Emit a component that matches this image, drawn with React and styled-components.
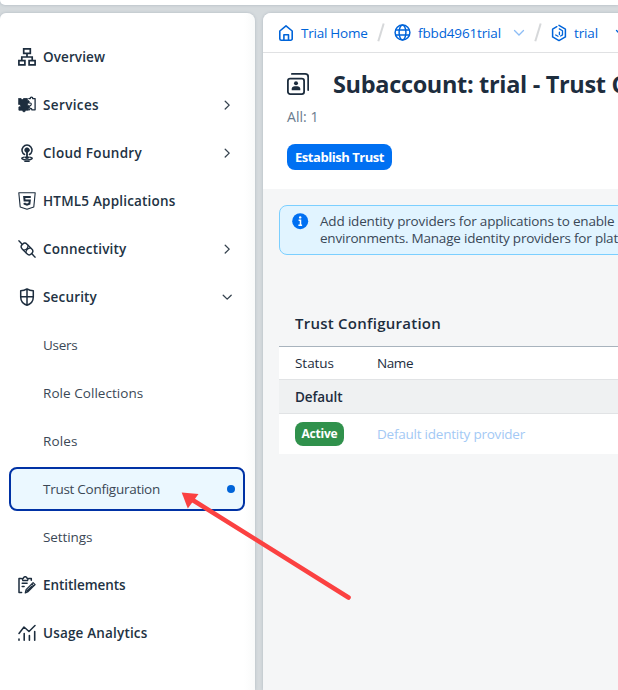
import React from "react";
import styled, { createGlobalStyle } from "styled-components";

const GlobalStyle = createGlobalStyle`
  * { box-sizing: border-box; }
  html, body { margin: 0; height: 100%; overflow: hidden; }
  body { font-family: "Open Sans", "Noto Sans", sans-serif; background: #d5dadd; color: #1d2d3e; }
`;

const Page = styled.div`
  position: relative;
  display: flex;
  flex-direction: column;
  width: 618px;
  height: 690px;
  overflow: hidden;
  background: #d5dadd;
`;

const ShellBar = styled.header`
  flex: none;
  height: 5px;
  background: #fff;
  border-bottom-left-radius: 5px;
  box-shadow: 0 0 3px rgba(85, 107, 130, 0.35);
`;

const Body = styled.div`
  display: flex;
  gap: 8px;
  flex: 1;
  min-height: 0;
  padding-top: 8px;
`;

const Sidebar = styled.nav`
  flex: none;
  display: flex;
  flex-direction: column;
  gap: 4px;
  width: 255px;
  padding: 22px 10px 0 9px;
  background: linear-gradient(to right, #fff 244px, #f9fafa 255px);
  border-radius: 6px 8px 0 0;
  box-shadow: 0 0 3px rgba(85, 107, 130, 0.3);
`;

const NavItem = styled.div`
  flex: none;
  display: flex;
  align-items: center;
  height: 44px;
  padding: 0 7px;
  border: 2px solid ${(p) => (p.$active ? "#0032a5" : "transparent")};
  border-radius: 8px;
  background: ${(p) => (p.$active ? "#ebf8ff" : "transparent")};
`;

const NavIcon = styled.span`
  flex: none;
  display: flex;
  width: 18px;
  height: 18px;
  margin-right: 7px;
  color: #1d2d3e;
`;

const Label = styled.span`
  font-size: ${(p) => p.$size || 13.5}px;
  font-weight: ${(p) => p.$weight || 400};
  letter-spacing: ${(p) => p.$track || 0}px;
  line-height: 18px;
  white-space: nowrap;
`;

const NavLabel = styled(Label)`
  flex: 1;
  color: ${(p) => (p.$weight ? "#223243" : "#3b4856")};
`;

const Chevron = styled.span`
  display: flex;
  width: 12px;
  height: 12px;
  margin-right: 3px;
  margin-bottom: 1px;
  color: #36434f;
`;

const ActiveDot = styled.span`
  width: 8px;
  height: 8px;
  border-radius: 50%;
  background: #0064d9;
  margin: 0 1px 1px 0;
`;

const Main = styled.main`
  flex: none;
  width: 760px;
  display: flex;
  flex-direction: column;
  background: #f5f6f7;
  border-top-left-radius: 8px;
  overflow: hidden;
  box-shadow: 0 0 3px rgba(85, 107, 130, 0.3);
`;

const Breadcrumbs = styled.div`
  flex: none;
  display: flex;
  align-items: center;
  height: 40px;
  padding-left: 15px;
  background: #fff;
  border-bottom: 1px solid #e0e1e3;
  color: #0064d9;
`;

const Crumb = styled.div`
  display: flex;
  align-items: center;
  gap: 7px;
  width: ${(p) => p.$width}px;
`;

const CrumbIcon = styled.span`
  flex: none;
  display: flex;
`;

const Slash = styled.span`
  flex: none;
  display: flex;
  margin: 0 9px;
`;

const CrumbChevron = styled.span`
  flex: none;
  display: flex;
  margin-left: ${(p) => p.$gap}px;
  color: ${(p) => (p.$strong ? "#0064d9" : "#8dbdf5")};
`;

const TitleArea = styled.section`
  flex: none;
  display: flex;
  flex-direction: column;
  align-items: flex-start;
  height: 136px;
  padding: 14px 0 0 24px;
  background: #fff;
`;

const TitleRow = styled.div`
  display: flex;
  align-items: center;
  gap: 24px;
  height: 34px;
`;

const TitleIcon = styled.span`
  display: flex;
  width: 22px;
`;

const Title = styled.h1`
  margin: 0;
  font-size: 23.5px;
  font-weight: 700;
  line-height: 34px;
  letter-spacing: -0.33px;
  white-space: nowrap;
  color: #1d2d3e;
`;

const Count = styled(Label)`
  margin-top: 7px;
  color: #6a7b8e;
`;

const PrimaryButton = styled.button`
  display: flex;
  align-items: center;
  justify-content: center;
  width: 105px;
  height: 26px;
  margin-top: 18px;
  padding: 0;
  border: 0;
  border-radius: 8px;
  background: #0070f2;
  color: #fff;
  font: 700 13px/18px "Open Sans", sans-serif;
  letter-spacing: -0.458px;
`;

const Content = styled.section`
  display: flex;
  flex-direction: column;
  padding: 16px 0 0 16px;
`;

const MessageStrip = styled.div`
  display: flex;
  gap: 11px;
  height: 50px;
  padding: 7px 0 0 12px;
  border: 1px solid #7bcfff;
  border-radius: 8px;
  background: #e1f4ff;
`;

const MessageText = styled.div`
  display: flex;
  flex-direction: column;
  color: #3a4857;
`;

const MessageLine = styled(Label)`
  line-height: 17px;
`;

const TableTitle = styled.h2`
  margin: 56px 0 0 16px;
  height: 35px;
  font-size: 15px;
  font-weight: 600;
  line-height: 24px;
  letter-spacing: 0.251px;
  color: #1d2d3e;
`;

const Table = styled.div`
  display: flex;
  flex-direction: column;
  border-top: 1px solid #a8b3bd;
`;

const TableRow = styled.div`
  display: grid;
  grid-template-columns: 82px 1fr;
  align-items: center;
  height: ${(p) => p.$height}px;
  padding-left: 16px;
  background: ${(p) => (p.$group ? "#eff1f2" : "#fff")};
  border-bottom: ${(p) => (p.$last ? "0" : "1px solid #e1e3e5")};
`;

const StatusBadge = styled.span`
  display: flex;
  align-items: center;
  justify-content: center;
  width: 49px;
  height: 24px;
  border-radius: 8px;
  background: #30914c;
  color: #fff;
`;

const ProviderLink = styled(Label)`
  color: #a3c9f5;
`;

const Pointer = styled.svg`
  position: absolute;
  left: 175px;
  top: 485px;
`;

const Svg18 = ({ children }) => (
  <svg width="18" height="18" viewBox="0 0 18 18" fill="none" stroke="currentColor" strokeWidth="1.5" strokeLinecap="round" strokeLinejoin="round">
    {children}
  </svg>
);

const icons = {
  overview: (
    <Svg18>
      <path d="M5.7.9h6.6v4.4H5.7zM.9 12.7h6v4.2h-6zM11.1 12.7h6v4.2h-6zM9 5.3v3.6M3.8 12.7V9h10.4v3.7" strokeWidth="1.7" strokeLinejoin="miter" />
    </Svg18>
  ),
  services: (
    <Svg18>
      <path d="M.7 2.6h2.4l1 1.5 1.5-1.6h3.8v2.2c2.2-1 3 2.600.2 2.700v2.200c2.600-.6 3.200 2.400.9 2.700v1.900H7.400c.4 2.200-3.200 2.200-2.800 0H.9v-3.300c2.100.3 2.300-2.700 0-2.500z" fill="currentColor" strokeWidth="0.8" />
      <path d="M10.800 2.600h1.500c-.3-2 2.700-2 2.400 0h2.400v11.200h-3.300c.1-1.800-2.200-1.800-2.200 0" strokeWidth="1.300" />
      <path d="M11.600 7.200c2.100-.9 2.300 2.400.3 2.300" strokeWidth="1.100" />
    </Svg18>
  ),
  foundry: (
    <Svg18>
      <path d="M6.6 10.500a5 5 0 1 1 4.800 0" />
      <circle cx="9" cy="6.100" r="2.300" fill="currentColor" strokeWidth="0.800" />
      <path d="M9 7v7.200M7.500 13.500h3" strokeWidth="1.800" />
      <path d="M6.200 13.100c-2.400.4-3 1.100-2 1.800 2 1.400 7.600 1.400 9.600 0 1-.7.4-1.400-2-1.800M6.800 17.300h4.400" strokeWidth="1.300" />
    </Svg18>
  ),
  html: (
    <Svg18>
      <path d="M.8.7h16.400l-1.400 14.200L9 17.300l-6.800-2.400z" strokeWidth="1.100" />
      <path d="M12.800 4.900H6.200l.4 3.600h5.200l-.4 3.300-2.400.8-2.400-.8-.1-1" strokeWidth="2" strokeLinecap="butt" strokeLinejoin="miter" />
    </Svg18>
  ),
  connectivity: (
    <Svg18>
      <g transform="translate(9 9) rotate(45)" strokeWidth="1.400">
        <path d="M-11.500 0h5M6.500 0h5" />
        <rect x="-6.500" y="-3.400" width="13" height="6.800" rx="3.100" />
        <path d="M-1.700-3.300c1.500 1.900 1.500 4.700 0 6.600M1.700-3.300c-1.500 1.900-1.500 4.700 0 6.600" strokeWidth="1.200" />
      </g>
    </Svg18>
  ),
  security: (
    <Svg18>
      <path d="M9 .9c2 1.400 4 1.900 6.300 1.900v6.100c0 4-2.500 6.900-6.300 8.300-3.800-1.400-6.300-4.300-6.300-8.300V2.800C5 2.800 7 2.300 9 .9zM9 1v16M2.700 8.800h12.600" />
    </Svg18>
  ),
  entitlements: (
    <Svg18>
      <path d="M3.300 2.500H1v13.900h2.600M10.800 2.500h2.500v1.800M4.300 2.600l1-.4c.6-2 3.200-2 3.800 0l1 .4-.6 2H4.900zM4.200 7.300h4.900M4.200 10.500h1.900" />
      <path d="M7.300 16.900l.8-3.300 7-7 2 2-7 7zM13.700 7.900l2 2M9.200 14.800l4.700-4.700" strokeWidth="1.300" />
    </Svg18>
  ),
  analytics: (
    <Svg18>
      <path d="M1 9.500l5-6.500 5 4.500 6-6" />
      <path d="M1 15v1.200M6.200 9.500v6.700M11.400 11.500v4.700M16.700 7.500v8.700" strokeWidth="1.600" />
    </Svg18>
  ),
};

const ChevronRight = () => (
  <svg width="12" height="12" viewBox="0 0 12 12" fill="none" stroke="currentColor" strokeWidth="1.300" strokeLinecap="round" strokeLinejoin="round">
    <path d="M4.200 2.200l4 3.900-4 3.900" />
  </svg>
);

const ChevronDown = () => (
  <svg width="12" height="12" viewBox="0 0 12 12" fill="none" stroke="currentColor" strokeWidth="1.300" strokeLinecap="round" strokeLinejoin="round">
    <path d="M2.200 4.200l4 3.900 4-3.900" />
  </svg>
);

const SlashMark = () => (
  <svg width="8" height="19" viewBox="0 0 8 19" fill="none" stroke="#d6d8da" strokeWidth="2">
    <path d="M6.700.5L1.300 18.300" />
  </svg>
);

const LinkChevron = () => (
  <svg width="12" height="8" viewBox="0 0 12 8" fill="none" stroke="currentColor" strokeWidth="1.300" strokeLinecap="round">
    <path d="M1.500 1.500L6 6l4.500-4.500" />
  </svg>
);

const HomeIcon = () => (
  <svg width="16" height="18" viewBox="0 0 16 18" fill="none" stroke="currentColor" strokeWidth="1.600" strokeLinejoin="round">
    <path d="M3.300 16.200a1.500 1.500 0 0 1-1.500-1.500V7L8 1.900 14.200 7v7.700a1.500 1.500 0 0 1-1.500 1.500h-9.400M5.900 16v-5.200h4.600V16" />
  </svg>
);

const GlobeIcon = () => (
  <svg width="17" height="17" viewBox="0 0 17 17" fill="none" stroke="currentColor" strokeWidth="1.500">
    <circle cx="8.500" cy="8.500" r="7.400" />
    <ellipse cx="8.500" cy="8.500" rx="3.400" ry="7.400" />
    <path d="M1.500 6.100h14M1.500 10.900h14" />
  </svg>
);

const HexIcon = () => (
  <svg width="16" height="18" viewBox="0 0 16 18" fill="none" stroke="currentColor" strokeWidth="1.500" strokeLinejoin="round" strokeLinecap="round">
    <path d="M5.800 2.700L1.600 5.100v7.800L8 16.600l6.400-3.700V5.100L8 1.400" />
    <path d="M8.300 4.900l3.200 1.900v4.100L9.600 12M4.700 11l2.300 1.300M8.400 8.200v2.300" strokeWidth="1.300" />
  </svg>
);

const SubaccountIcon = () => (
  <svg width="22" height="22" viewBox="0 0 22 22" fill="none" stroke="#1d2d3e" strokeWidth="1.800" strokeLinecap="round">
    <rect x=".9" y="5.600" width="16.200" height="15.500" rx="2.300" />
    <path d="M4.900.9h13.300a3 3 0 0 1 3 3V17" />
    <circle cx="9" cy="10.300" r="2" fill="#1d2d3e" stroke="none" />
    <path d="M4.700 17.200v-1.500c0-1.600 1.300-2.500 2.900-2.500h2.800c1.600 0 2.900.9 2.900 2.500v1.500z" fill="#1d2d3e" stroke="none" />
  </svg>
);

const InfoIcon = () => (
  <svg width="17" height="17" viewBox="0 0 17 17">
    <circle cx="8.200" cy="8.200" r="8" fill="#0070f2" />
    <circle cx="8.200" cy="4.400" r="1.200" fill="#fff" />
    <path d="M6.600 7.200h1.900v5M6.400 12.200h3.700" stroke="#fff" strokeWidth="1.500" fill="none" />
  </svg>
);

const navItems = [
  { text: "Overview", icon: "overview", track: 0.098 },
  { text: "Services", icon: "services", track: 0.367, arrow: "right" },
  { text: "Cloud Foundry", icon: "foundry", track: 0.3, arrow: "right" },
  { text: "HTML5 Applications", icon: "html", track: 0.191 },
  { text: "Connectivity", icon: "connectivity", track: 0.202, arrow: "right" },
  { text: "Security", icon: "security", track: 0.17, arrow: "down" },
  { text: "Users", track: -0.263 },
  { text: "Role Collections", track: 0.05 },
  { text: "Roles", track: 0.122 },
  { text: "Trust Configuration", track: -0.27, active: true },
  { text: "Settings", track: -0.1 },
  { text: "Entitlements", icon: "entitlements", track: -0.063 },
  { text: "Usage Analytics", icon: "analytics", track: 0.173 },
];

export default function App() {
  return (
    <>
      <GlobalStyle />
      <Page>
        <ShellBar />
        <Body>
          <Sidebar>
            {navItems.map((item) => (
              <NavItem key={item.text} $active={item.active}>
                <NavIcon>{item.icon && icons[item.icon]}</NavIcon>
                <NavLabel $weight={item.icon ? 600 : undefined} $track={item.track}>
                  {item.text}
                </NavLabel>
                {item.arrow && <Chevron>{item.arrow === "right" ? <ChevronRight /> : <ChevronDown />}</Chevron>}
                {item.active && <ActiveDot />}
              </NavItem>
            ))}
          </Sidebar>
          <Main>
            <Breadcrumbs>
              <Crumb $width={90}>
                <CrumbIcon><HomeIcon /></CrumbIcon>
                <Label $track={-0.244}>Trial Home</Label>
              </Crumb>
              <Slash><SlashMark /></Slash>
              <Crumb $width={107}>
                <CrumbIcon><GlobeIcon /></CrumbIcon>
                <Label $track={-0.142}>fbbd4961trial</Label>
              </Crumb>
              <CrumbChevron $gap={12}><LinkChevron /></CrumbChevron>
              <Slash><SlashMark /></Slash>
              <Crumb $width={47}>
                <CrumbIcon><HexIcon /></CrumbIcon>
                <Label $track={-0.131}>trial</Label>
              </Crumb>
              <CrumbChevron $gap={17} $strong><LinkChevron /></CrumbChevron>
            </Breadcrumbs>
            <TitleArea>
              <TitleRow>
                <TitleIcon><SubaccountIcon /></TitleIcon>
                <Title>Subaccount: trial - Trust Configuration</Title>
              </TitleRow>
              <Count $size={14} $track={0.05}>All: 1</Count>
              <PrimaryButton>Establish Trust</PrimaryButton>
            </TitleArea>
            <Content>
              <MessageStrip>
                <InfoIcon />
                <MessageText>
                  <MessageLine $track={-0.17}>Add identity providers for applications to enable</MessageLine>
                  <MessageLine $track={-0.214}>environments. Manage identity providers for platform</MessageLine>
                </MessageText>
              </MessageStrip>
              <TableTitle>Trust Configuration</TableTitle>
              <Table>
                <TableRow $height={33}>
                  <Label $track={-0.042}>Status</Label>
                  <Label $track={-0.4}>Name</Label>
                </TableRow>
                <TableRow $height={34} $group>
                  <Label $weight={600} $track={-0.083}>Default</Label>
                </TableRow>
                <TableRow $height={40} $last>
                  <StatusBadge>
                    <Label $size={12} $weight={700} $track={-0.208}>Active</Label>
                  </StatusBadge>
                  <ProviderLink $track={-0.227}>Default identity provider</ProviderLink>
                </TableRow>
              </Table>
            </Content>
          </Main>
        </Body>
        <Pointer width="180" height="118" viewBox="0 0 180 118">
          <path d="M173.500 112.500L16 14" stroke="#fb4141" strokeWidth="4.600" strokeLinecap="round" />
          <path d="M6.700 7.500L23.500 9l-10.700 14.500z" fill="#fb4141" />
        </Pointer>
      </Page>
    </>
  );
}
